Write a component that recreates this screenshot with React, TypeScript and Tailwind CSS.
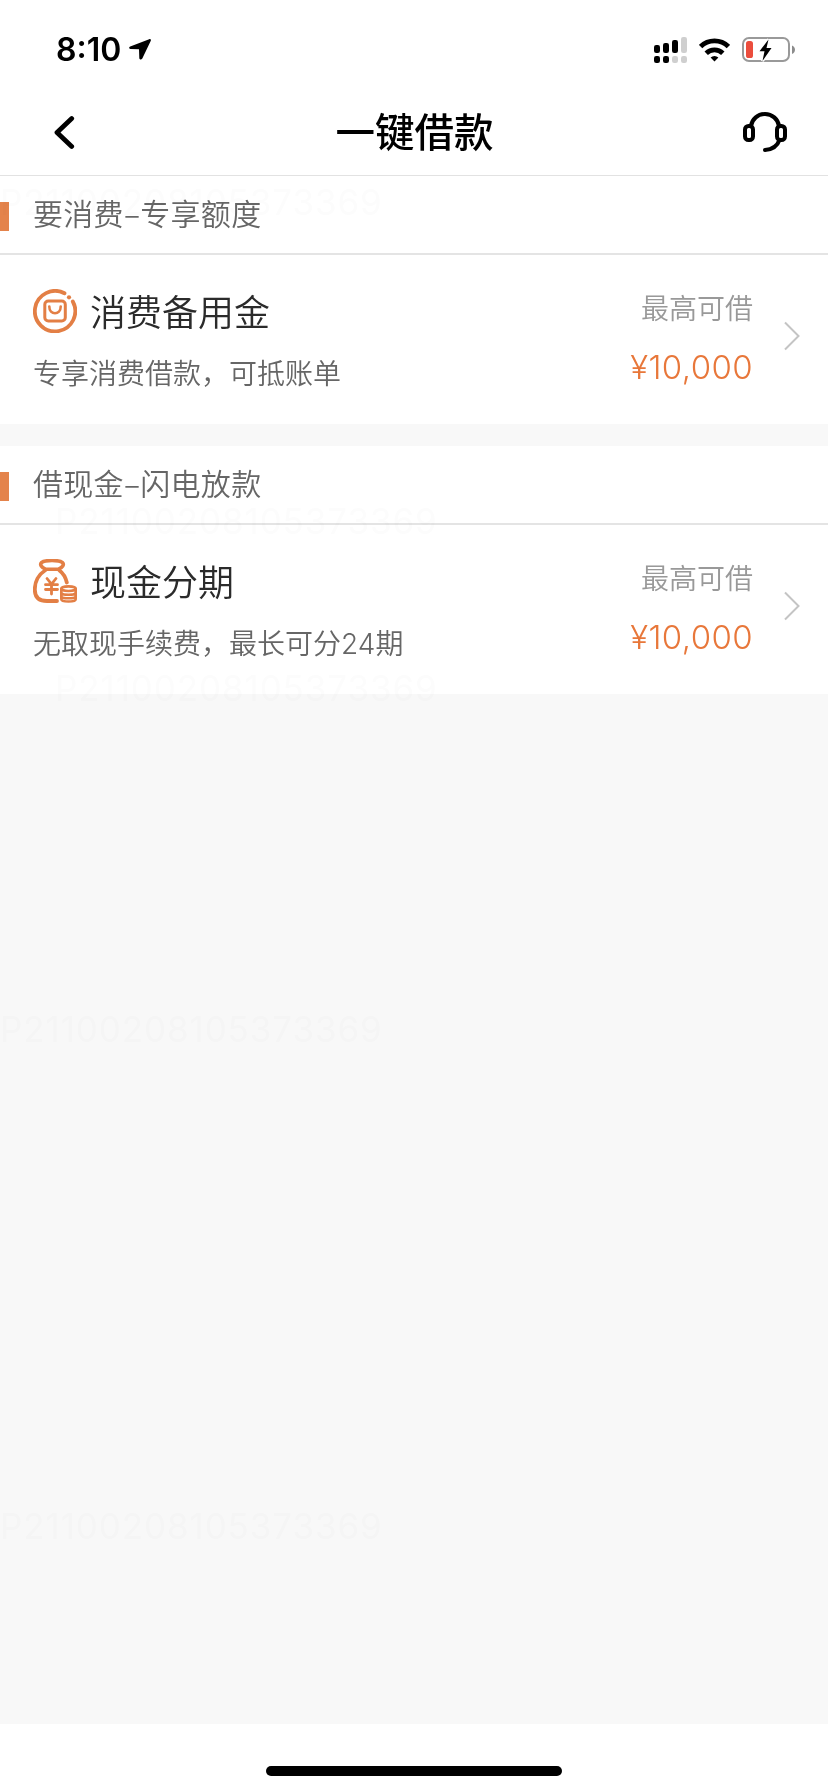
import type { ReactNode } from 'react'

const WATERMARK = 'P21100208105373369'

// the watermark is spread over the whole page, almost invisible
const watermarks = [
  { id: 1, className: 'left-0 top-[184px]' },
  { id: 2, className: 'left-[55px] top-[503px]' },
  { id: 3, className: 'left-[55px] top-[670px]' },
  { id: 4, className: 'left-0 top-[1011px]' },
  { id: 5, className: 'left-0 top-[1508px]' },
]

const StatusBar = () => {
  return (
    <div className="flex h-[88px] items-center justify-between pt-[11px] pr-[33px] pl-[56px]">
      <div className="flex items-center gap-2">
        <span className="pt-px font-['Inter',sans-serif] text-[32px] leading-none font-semibold">8:10</span>
        <svg className="h-[21px] w-[22px]" viewBox="0 0 22 21" fill="#000">
          <path d="M20.2 .2 1.2 7.6C-.3 8.2-.1 9.8 1.4 9.9L10 10.3 10.3 19.1C10.4 20.9 12.4 21.1 13.3 19.5L21.8 1.7C22.2.7 21.3-.2 20.2.2Z" />
        </svg>
      </div>
      <div className="flex items-center">
        <svg className="h-[26px] w-[33px]" viewBox="0 0 33 26">
          <rect x="0" y="8" width="6" height="8" rx="2.2" />
          <rect x="9" y="6" width="6" height="10" rx="2.2" />
          <rect x="18" y="3" width="6" height="13" rx="2.2" />
          <rect x="27" y="0" width="6" height="16" rx="2.2" fill="#cfcfcf" />
          <rect x="0" y="19" width="6" height="7" rx="2.2" />
          <rect x="9" y="19" width="6" height="7" rx="2.2" />
          <rect x="18" y="19" width="6" height="7" rx="2.2" fill="#cfcfcf" />
          <rect x="27" y="19" width="6" height="7" rx="2.2" fill="#cfcfcf" />
        </svg>
        <svg className="ml-[12px] h-[24px] w-[31px]" viewBox="0 0 31 24" fill="none" stroke="#000" strokeWidth="4.8">
          <path d="M1.6 8.6A19.8 19.8 0 0 1 29.4 8.6" />
          <path d="M7.2 15.2A11.8 11.8 0 0 1 23.8 15.2" />
          <path d="M11.6 19.6A5.8 5.8 0 0 1 19.4 19.6L15.5 23.5Z" fill="#000" stroke="none" />
        </svg>
        <svg className="ml-[12px] h-[28px] w-[53px]" viewBox="0 0 53 28">
          <rect x="1" y="2" width="46" height="23" rx="6" fill="none" stroke="#999" strokeWidth="2" />
          <path d="M50 9.5C54 11 54 16.5 50 18Z" fill="#8c8c8c" />
          <rect x="4" y="5" width="7" height="17" rx="2.6" fill="#eb4d3d" />
          <path d="M26.5 3.5 17.5 15.2H22.5L20.5 25 29.5 12H24.5Z" fill="#000" stroke="#fff" strokeWidth="3" paintOrder="stroke" />
        </svg>
      </div>
    </div>
  )
}

const NavBar = () => {
  return (
    <div className="flex h-[88px] items-center justify-between border-b border-[#e2e2e2] pt-px pr-[41px] pl-[54px]">
      <svg className="h-[33px] w-[32px]" viewBox="0 0 32 33" fill="none" stroke="#000" strokeWidth="4.8" strokeLinecap="round" strokeLinejoin="round">
        <path d="M17.7 2.6 3 16.5 17.7 30.4" />
      </svg>
      <h1 className="pb-[4px] text-[39.5px] leading-none font-medium">一键借款</h1>
      <svg className="h-[40px] w-[44px]" viewBox="0 0 44 40" fill="none" stroke="#000" strokeWidth="4" strokeLinecap="round">
        <rect x="2" y="14" width="8" height="14" rx="3.5" />
        <rect x="34" y="14" width="8" height="14" rx="3.5" />
        <path d="M8 14C9 7 15 2 22 2S35 7 36 14" />
        <path d="M36.5 28C34.5 33.5 29.5 37.5 22 38" />
      </svg>
    </div>
  )
}

const BagIcon = () => {
  return (
    <svg className="h-[44px] w-[44px]" viewBox="0 0 44 44" fill="none" stroke="#e37f45" strokeLinecap="round" strokeLinejoin="round">
      <path d="M31.5 4.3A20.2 20.2 0 1 0 39.8 12.5" strokeWidth="3.8" />
      <circle cx="36" cy="8.3" r="2.1" fill="#e37f45" stroke="none" />
      <rect x="11.8" y="12" width="20.5" height="20" rx="3.5" strokeWidth="3" />
      <path d="M16.3 17.5C16.3 26.5 27.7 26.5 27.7 17.5" strokeWidth="2.6" />
    </svg>
  )
}

const MoneyIcon = () => {
  return (
    <svg className="h-[44px] w-[44px]" viewBox="0 0 44 44" fill="none" stroke="#e37f45" strokeLinecap="round" strokeLinejoin="round">
      <path d="M12.5 10.2C8.5 8.5 6.5 5.5 8.5 3.6 11.5 .8 26.5 .8 29.5 3.6 31.5 5.5 29.5 8.5 25.5 10.2Z" strokeWidth="3.6" />
      <path d="M12 11.5C5.5 15.5 1.8 23 1.8 30.5 1.8 38.5 6.5 42 14 42H24M26.5 11.5C30.5 14.5 32.5 18 33.8 23.5" strokeWidth="3.8" />
      <path d="M14 19.5 18.5 25.2 23 19.5M12.5 25.7H24.5M12.5 30.5H24.5M18.5 25.7V35" strokeWidth="2.8" />
      <ellipse cx="35.5" cy="29.7" rx="7.2" ry="2.3" strokeWidth="2.6" />
      <path d="M28.3 30V40.2C28.3 43.2 42.7 43.2 42.7 40.2V30M28.3 33.6C29 36.5 42 36.5 42.7 33.6M28.3 37.2C29 40 42 40 42.7 37.2" strokeWidth="2.6" />
    </svg>
  )
}

type LoanSectionProps = {
  heading: string
  icon: ReactNode
  title: string
  desc: ReactNode
  amount: string
}

const LoanSection = ({ heading, icon, title, desc, amount }: LoanSectionProps) => {
  return (
    <section className="bg-white">
      <div className="flex h-[79px] items-center border-b-2 border-[#e4e4e4]">
        <div className="mt-[3px] h-[29px] w-[9px] bg-[#e4834b]" />
        <h2 className="ml-6 pb-[6px] text-[30px] leading-none font-[350] tracking-[0.3px] text-[#666]">{heading}</h2>
      </div>
      <div className="flex h-[169px] items-start justify-between pr-[28px] pl-[33px]">
        <div className="pt-[34px]">
          <div className="flex h-[44px] items-center gap-[13px]">
            {icon}
            <h3 className="pb-[3px] text-[36px] leading-none font-[350] text-[#2b2b2b]">{title}</h3>
          </div>
          <p className="mt-[25px] text-[28px] leading-none font-[350] text-[#666]">{desc}</p>
        </div>
        <div className="flex items-center gap-[31px]">
          <div className="pt-[38px] text-right">
            <p className="text-[28px] leading-none font-[350] text-[#999]">最高可借</p>
            <p className="mt-[30px] font-['Inter',sans-serif] text-[33px] leading-none font-light tracking-[0.4px] text-[#e8773a]">{amount}</p>
          </div>
          <svg className="mt-[33px] h-[30px] w-[16px]" viewBox="0 0 16 30" fill="none" stroke="#c4c4c4" strokeWidth="2">
            <path d="M1 1.5 14.5 15 1 28.5" />
          </svg>
        </div>
      </div>
    </section>
  )
}

const App = () => {
  return (
    <div className="relative flex h-[1792px] w-[828px] flex-col overflow-hidden bg-white font-['Noto_Sans_CJK_SC',sans-serif] text-black">
      <StatusBar />
      <NavBar />
      <main className="flex h-[1548px] flex-col gap-[22px] bg-[#f8f8f8]">
        <LoanSection
          heading="要消费–专享额度"
          icon={<BagIcon />}
          title="消费备用金"
          desc="专享消费借款，可抵账单"
          amount="¥10,000"
        />
        <LoanSection
          heading="借现金–闪电放款"
          icon={<MoneyIcon />}
          title="现金分期"
          desc={<>无取现手续费，最长可分<span className="font-['Inter',sans-serif] font-light">24</span>期</>}
          amount="¥10,000"
        />
      </main>
      <div className="flex flex-1 justify-center pt-[42px]">
        <div className="h-[10px] w-[296px] rounded-full bg-black" />
      </div>

      {watermarks.map((mark) => (
        <span
          key={mark.id}
          className={`pointer-events-none absolute font-['Inter',sans-serif] text-[35px] leading-[37px] tracking-[0.9px] text-[#fcfcfc] mix-blend-multiply ${mark.className}`}
        >
          {WATERMARK}
        </span>
      ))}
    </div>
  )
}

export default App
